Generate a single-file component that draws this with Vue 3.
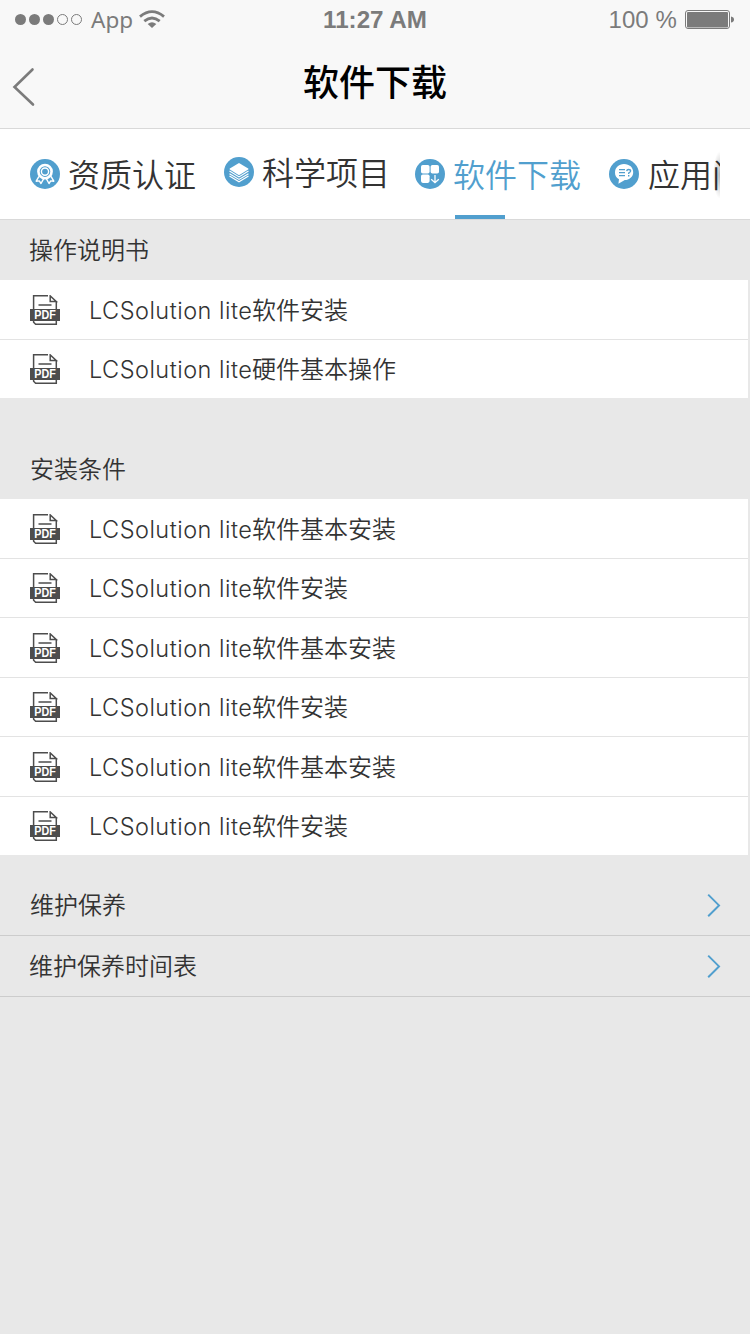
<script setup>
const tabs = [
  { icon: 'medal', label: '资质认证' },
  { icon: 'layers', label: '科学项目', raised: true },
  { icon: 'apps', label: '软件下载', active: true },
  { icon: 'chat', label: '应用问' },
]
const sections = [
  { title: '操作说明书', items: ['软件安装', '硬件基本操作'] },
  {
    title: '安装条件',
    items: ['软件基本安装', '软件安装', '软件基本安装', '软件安装', '软件基本安装', '软件安装'],
  },
]
const links = ['维护保养', '维护保养时间表']
</script>

<template>
  <div class="screen">
    <header class="header">
      <div class="status">
        <div class="status-left">
          <svg class="signal" width="68" height="12" viewBox="0 0 68 12">
            <g fill="#7b7b7b">
              <circle cx="5.5" cy="5.5" r="5.5" /><circle cx="19.5" cy="5.5" r="5.5" /><circle cx="33.5" cy="5.5" r="5.5" />
            </g>
            <g fill="none" stroke="#7b7b7b">
              <circle cx="47.5" cy="5.5" r="5" /><circle cx="61.5" cy="5.5" r="5" />
            </g>
          </svg>
          <span class="carrier">App</span>
          <svg class="wifi" width="26" height="19" viewBox="0 0 26 19">
            <g fill="none" stroke="#7b7b7b" stroke-width="2.8">
              <path d="M1 6.6 Q13 -3.4 25 6.6" />
              <path d="M5.3 11.2 Q13 4.8 20.7 11.2" />
            </g>
            <path d="M8.7 14 Q13 10.6 17.3 14 L13 18Z" fill="#7b7b7b" />
          </svg>
        </div>
        <div class="clock">11:27 AM</div>
        <div class="status-right">
          <span class="percent">100 %</span>
          <svg width="50" height="20" viewBox="0 0 50 20">
            <rect x=".5" y=".5" width="44" height="18" rx="2.5" fill="none" stroke="#7b7b7b" />
            <rect x="2" y="2" width="41" height="15.5" rx="1" fill="#7b7b7b" />
            <path d="M46 6.5 Q49 7 49 9.5 Q49 12 46 12.5Z" fill="#7b7b7b" />
          </svg>
        </div>
      </div>
      <div class="navbar">
        <svg class="back" width="24" height="40" viewBox="0 0 24 40">
          <path d="M20.5 2.5 L2.5 20 L21 37.5" fill="none" stroke="#7b7b7b" stroke-width="2.6" stroke-linecap="round" />
        </svg>
        <h1 class="title">软件下载</h1>
      </div>
    </header>

    <nav class="tabs">
      <div class="tab-strip">
        <div v-for="t in tabs" :key="t.label" class="tab" :class="[t.icon, { active: t.active, raised: t.raised }]">
          <svg class="tab-icon" width="30" height="30" viewBox="0 0 30 30">
            <circle cx="15" cy="15" r="15" fill="#519fce" />
            <g v-if="t.icon === 'medal'" fill="none" stroke="#fff">
              <circle cx="15" cy="12.6" r="6.6" stroke-width="2.6" />
              <circle cx="15" cy="12.6" r="3.6" stroke-width="1.4" />
              <path d="M9 17.3 L6.2 22.2 L9.3 21.9 L11 24.5 L13.7 19.6 M21 17.3 L23.8 22.2 L20.7 21.9 L19 24.5 L16.3 19.6" stroke-width="1.4" stroke-linejoin="round" />
            </g>
            <g v-else-if="t.icon === 'layers'">
              <path d="M15 6 L24.2 11.6 Q24.8 12.1 24.2 12.6 L15 18.2 L5.8 12.6 Q5.2 12.1 5.8 11.6Z" fill="#fff" />
              <path d="M5.5 14 L15 19.9 L24.5 14 M5.5 16.7 L15 22.4 L24.5 16.7 M5.5 19.1 L15 24.8 L24.5 19.1" fill="none" stroke="#fff" stroke-width="1.2" />
            </g>
            <g v-else-if="t.icon === 'apps'">
              <g fill="#fff">
                <rect x="6" y="6" width="8.6" height="8.5" rx="1.8" />
                <rect x="15.6" y="6" width="8.4" height="8.5" rx="1.8" />
                <rect x="6" y="15.5" width="8.6" height="8.4" rx="1.8" />
              </g>
              <path d="M20 16 V23.6 M16.2 20.2 L20 23.7 L23.8 20.2" fill="none" stroke="#fff" stroke-width="1.3" />
            </g>
            <g v-else>
              <path d="M15 5 C20.5 5 24.2 8.6 24.2 13.2 C24.2 17.9 20.3 20.8 15.8 21.1 L9.4 24.8 L10 20.2 C7.3 18.8 6 16.5 6 13.4 C6 8.6 9.7 5 15 5Z" fill="#fff" />
              <path d="M10 10.6 H16 M10 13.6 H16 M10 16.6 H16" stroke="#519fce" stroke-width="1.3" />
              <path d="M17.7 12.2 Q17.9 10.5 19.6 10.5 Q21.6 10.5 21.6 12 Q21.6 13 19.7 14 V15 M19.7 16 V17.4" fill="none" stroke="#519fce" stroke-width="1.4" />
            </g>
          </svg>
          <span class="tab-label">{{ t.label }}</span>
        </div>
      </div>
    </nav>

    <main>
      <section v-for="s in sections" :key="s.title" class="section">
        <h2 class="heading">{{ s.title }}</h2>
        <ul class="list">
          <li v-for="(item, i) in s.items" :key="i" class="row">
            <svg class="pdf" width="30" height="30" viewBox="0 0 30 30">
              <g fill="none" stroke="#4d4d4d" stroke-width="1.5">
                <path d="M3.6 14 V.8 H18" />
                <path d="M20.2 .9 V6.4 H26.2Z" stroke-width="1.5" />
                <path d="M26.3 6 V14 M8.5 10 H21.5" />
                <path d="M3.6 25 V27.2 L5.6 29.2 H26.3 V25" />
              </g>
              <rect y="14" width="30" height="12" fill="#4d4d4d" />
              <text x="15" y="24.2" class="pdf-text" text-anchor="middle" textLength="21.5" lengthAdjust="spacingAndGlyphs">PDF</text>
            </svg>
            <span class="row-text"><span class="latin">LCSolution lite</span><span class="cjk">{{ item }}</span></span>
          </li>
        </ul>
      </section>
      <div class="links">
        <a v-for="l in links" :key="l" class="link">
          <span class="link-text">{{ l }}</span>
          <svg width="14" height="24" viewBox="0 0 14 24">
            <path d="M1.2 1.6 L12 12.4 L1.2 23.2" fill="none" stroke="#519fce" stroke-width="2" />
          </svg>
        </a>
      </div>
    </main>
  </div>
</template>

<style>
body {
  background: #e8e8e8;
}
</style>

<style scoped>
.screen {
  width: 750px;
  height: 1334px;
  overflow: hidden;
  background: #e8e8e8;
  color: #333;
  font-family: "Noto Sans CJK SC DemiLight", "Noto Sans CJK SC", sans-serif;
  font-weight: 350;
}
.header {
  box-sizing: border-box;
  height: 129px;
  background: #f8f8f8;
  border-bottom: 1px solid #d9d9d9;
}
.status {
  display: grid;
  grid-template-columns: 1fr auto 1fr;
  align-items: center;
  height: 40px;
  padding: 0 15px;
  color: #7b7b7b;
  font-family: "Liberation Sans", sans-serif;
  font-size: 24px;
  font-weight: 400;
}
.status-left,
.status-right {
  display: flex;
  align-items: center;
}
.status-right {
  justify-content: flex-end;
  gap: 8px;
}
.carrier {
  margin: 0 6px 0 8px;
  font-family: "Noto Sans", sans-serif;
  font-size: 22.5px;
  line-height: 38px;
}
.wifi {
  margin-bottom: 2px;
}
.clock {
  padding-bottom: 1px;
  font-weight: 700;
  font-size: 24.2px;
}
.percent {
  letter-spacing: 0.1px;
}
.navbar {
  display: grid;
  grid-template-columns: 40px 1fr 40px;
  align-items: center;
  height: 88px;
}
.back {
  margin: 5px 0 0 12px;
}
.title {
  margin: 0;
  padding-bottom: 8px;
  color: #000;
  font-family: "Noto Sans CJK SC", sans-serif;
  font-size: 36px;
  font-weight: 500;
  line-height: 80px;
  text-align: center;
}
.tabs {
  box-sizing: border-box;
  height: 91px;
  padding: 0 30px;
  background: #fff;
  border-bottom: 1px solid #d9d9d9;
}
.tab-strip {
  position: relative;
  display: flex;
  gap: 28px;
  height: 90px;
  overflow: hidden;
}
.tab-strip::after {
  content: "";
  position: absolute;
  top: 22px;
  right: 0;
  width: 7px;
  height: 48px;
  background: radial-gradient(ellipse at right, rgba(0, 0, 0, 0.28), transparent 70%);
}
.tab {
  position: relative;
  display: flex;
  flex: none;
  align-items: center;
  gap: 8px;
  height: 90px;
  font-size: 32px;
}
.tab-label {
  padding-bottom: 2px;
}
.tab.chat .tab-label {
  margin-left: 1px;
}
.tab.raised {
  margin-top: -2px;
}
.tab.apps {
  margin-left: -3px;
}
.tab.active {
  color: #519fce;
}
.tab.active::after {
  content: "";
  position: absolute;
  left: 40px;
  bottom: 0;
  width: 50px;
  height: 4px;
  background: #519fce;
}
.heading {
  box-sizing: border-box;
  height: 60px;
  margin: 0;
  padding-left: 29px;
  font-size: 24px;
  font-weight: inherit;
  line-height: 58px;
}
.section + .section {
  margin-top: 41px;
}
.section + .section .heading {
  padding-left: 30px;
}
.list {
  width: 748px;
  margin: 0;
  padding: 0;
  list-style: none;
  background: #fff;
}
.row {
  box-sizing: border-box;
  display: flex;
  height: 60px;
  padding: 15px 0 0 30px;
  border-bottom: 1px solid #e3e3e3;
}
.row:nth-child(even) {
  height: 59px;
  padding-top: 14px;
}
.row:last-child {
  height: 58px;
  border-bottom: 0;
}
.pdf {
  flex: none;
}
.pdf-text {
  fill: #fff;
  font: 700 12px "Liberation Sans", sans-serif;
}
.row-text {
  display: flex;
  margin-left: 29px;
  font-size: 24px;
  line-height: 32px;
}
.latin {
  width: 163px;
  font-family: Inter, sans-serif;
  font-size: 23.5px;
  letter-spacing: 0.48px;
  line-height: 31px;
  white-space: pre;
}
.cjk {
  line-height: 28px;
}
.links {
  padding-top: 20px;
}
.link {
  box-sizing: border-box;
  display: flex;
  align-items: center;
  justify-content: space-between;
  height: 61px;
  padding: 0 29px 0 30px;
  border-bottom: 1px solid #ccc;
  font-size: 24px;
}
.link:last-child {
  padding-left: 29px;
}
.link-text {
  padding-bottom: 3px;
}
</style>
